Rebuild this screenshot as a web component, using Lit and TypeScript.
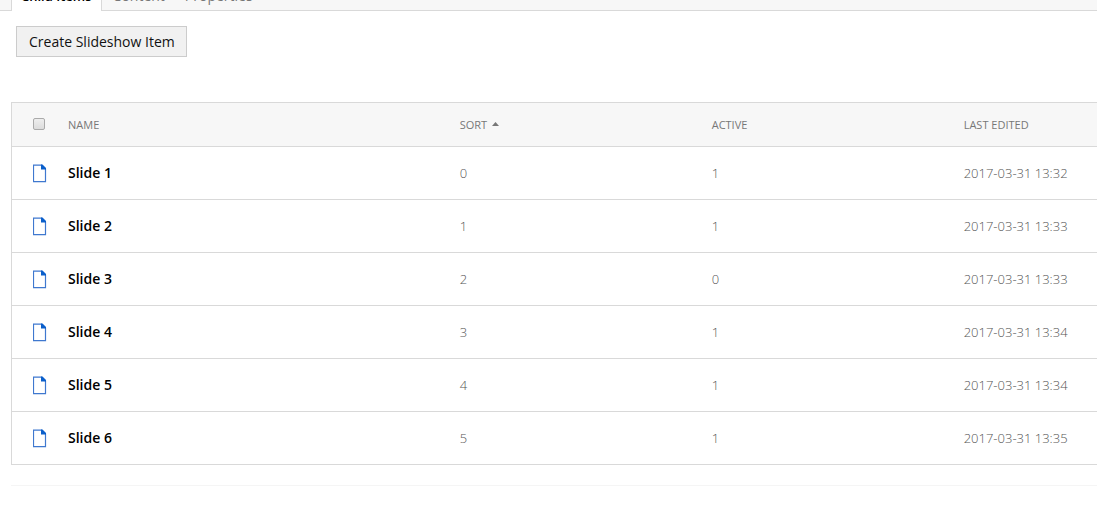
import { LitElement, html, css } from "lit";
import { customElement, state } from "lit/decorators.js";

interface Slide {
  name: string;
  sort: number;
  active: number;
  edited: string;
}

@customElement("page-icon")
class PageIcon extends LitElement {
  static styles = css`
    :host {
      display: block;
    }
    .icon {
      display: block;
      width: 14px;
      height: 20px;
    }
  `;

  render() {
    return html`<svg class="icon" viewBox="0 0 14 20" aria-hidden="true">
      <path d="M.5 2.2H8.5L12.5 6V18.7H.5Z" fill="#fff" stroke="#3f78cf" stroke-width="1.2" />
      <path d="M8 1.6H9.5L13 5V6.4H8Z" fill="#0a5fcb" />
    </svg>`;
  }
}

@customElement("app-root")
export class AppRoot extends LitElement {
  static styles = css`
    :host {
      display: block;
      overflow: hidden;
      background: #fff;
      color: #000;
      font-family: "Open Sans", "Noto Sans", sans-serif;
      font-size: 14px;
    }
    .tabs {
      display: flex;
      box-sizing: border-box;
      height: 33px;
      margin-top: -22px;
      padding-left: 11px;
      background: #f7f7f7;
      border-bottom: 1px solid #d9d9d9;
    }
    .tab {
      box-sizing: border-box;
      height: 33px;
      padding: 0 10px;
      border: 0;
      background: none;
      color: #777;
      font: inherit;
      line-height: 36px;
    }
    .tab.selected {
      padding: 0 9px;
      margin-right: 1px;
      background: #fff;
      border: solid #d9d9d9;
      border-width: 0 1px;
      color: #000;
      font-size: 13px;
      font-weight: 600;
    }
    .toolbar {
      padding: 15px 16px 45px;
    }
    .create {
      display: block;
      box-sizing: border-box;
      height: 31px;
      padding: 0 11px 0 12px;
      border: 1px solid #ccc;
      background: #f1f1f1;
      color: #111;
      font: inherit;
      line-height: 29px;
    }
    .listing {
      margin-left: 11px;
      padding-bottom: 20px;
      border-bottom: 1px solid #f5f5f5;
    }
    .grid {
      width: 100%;
      table-layout: fixed;
      border-spacing: 0;
      border: solid #d9d9d9;
      border-width: 1px 0 0 1px;
    }
    .col-pick {
      width: 56px;
    }
    .col-name {
      width: 36.1%;
    }
    .col-value {
      width: 252px;
    }
    th,
    td {
      box-sizing: border-box;
      padding: 0;
      text-align: left;
      white-space: nowrap;
      border-bottom: 1px solid #d9d9d9;
    }
    th {
      height: 44px;
      background: #f7f7f7;
      color: #777;
      font-size: 11px;
      font-weight: 500;
      text-transform: uppercase;
    }
    td {
      height: 53px;
      color: #555;
      font-size: 13px;
      font-weight: 300;
    }
    .pick {
      padding-left: 21px;
    }
    th.pick {
      padding-bottom: 2px;
    }
    .all {
      display: block;
      appearance: none;
      box-sizing: border-box;
      width: 12px;
      height: 12px;
      margin: 0;
      border: 1px solid #aaa;
      border-radius: 2px;
      background: linear-gradient(#eee, #dcdcdc);
    }
    .all:checked {
      background: #2b6bcb;
    }
    td.name {
      padding-bottom: 2px;
      color: #000;
      font-size: 14px;
      font-weight: 600;
    }
    .sort {
      padding: 0;
      border: 0;
      background: none;
      color: inherit;
      font: inherit;
      text-transform: inherit;
    }
    .arrow {
      width: 7px;
      height: 4px;
      margin-left: 5px;
      vertical-align: 3px;
    }
  `;

  @state() private ascending = true;

  @state() private slides: Slide[] = [
    { name: "Slide 1", sort: 0, active: 1, edited: "2017-03-31 13:32" },
    { name: "Slide 2", sort: 1, active: 1, edited: "2017-03-31 13:33" },
    { name: "Slide 3", sort: 2, active: 0, edited: "2017-03-31 13:33" },
    { name: "Slide 4", sort: 3, active: 1, edited: "2017-03-31 13:34" },
    { name: "Slide 5", sort: 4, active: 1, edited: "2017-03-31 13:34" },
    { name: "Slide 6", sort: 5, active: 1, edited: "2017-03-31 13:35" },
  ];

  private toggleSort() {
    this.ascending = !this.ascending;
    this.slides = [...this.slides].reverse();
  }

  render() {
    return html`
      <nav class="tabs" role="tablist">
        <button class="tab selected" role="tab" aria-selected="true">Child Items</button>
        <button class="tab" role="tab" aria-selected="false">Content</button>
        <button class="tab" role="tab" aria-selected="false">Properties</button>
      </nav>
      <div class="toolbar">
        <button class="create">Create Slideshow Item</button>
      </div>
      <div class="listing">
        <table class="grid">
          <colgroup>
            <col class="col-pick" />
            <col class="col-name" />
            <col class="col-value" />
            <col class="col-value" />
            <col />
          </colgroup>
          <thead>
            <tr>
              <th class="pick"><input class="all" type="checkbox" aria-label="Select all" /></th>
              <th>Name</th>
              <th>
                <button class="sort" @click=${this.toggleSort}>Sort<svg class="arrow" viewBox="0 0 7 4" aria-hidden="true">
                    <path d=${this.ascending ? "M0 4L3.5 0L7 4Z" : "M0 0L3.5 4L7 0Z"} fill="#777" />
                  </svg></button>
              </th>
              <th>Active</th>
              <th>Last edited</th>
            </tr>
          </thead>
          <tbody>
            ${this.slides.map(
              (s) => html`<tr>
                <td class="pick"><page-icon></page-icon></td>
                <td class="name">${s.name}</td>
                <td>${s.sort}</td>
                <td>${s.active}</td>
                <td>${s.edited}</td>
              </tr>`
            )}
          </tbody>
        </table>
      </div>
    `;
  }
}
